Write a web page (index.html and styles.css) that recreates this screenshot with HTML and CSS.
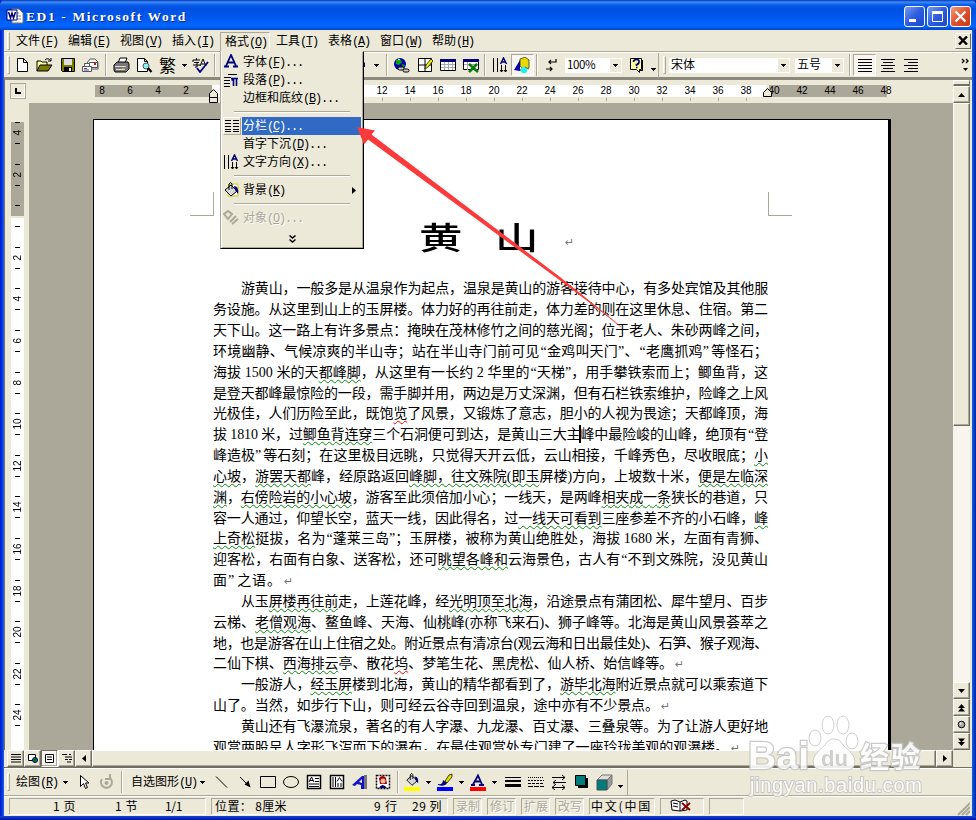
FILE: index.html
```html
<!DOCTYPE html>
<html lang="zh-CN">
<head>
<meta charset="utf-8">
<title>ED1 - Microsoft Word</title>
<link rel="stylesheet" href="styles.css">
</head>
<body>
<svg width="0" height="0" class="defs">
  <symbol id="down" viewBox="0 0 5 3"><path d="M0 0h5v1h-1v1h-1v1h-1v-1h-1v-1h-1z"/></symbol>
  <symbol id="dir" viewBox="0 0 16 16"><path d="M1.500 1v14M5.500 1v14M9.500 8v7M13.500 8v7M8 13l1.500 2 1.500-2M12 13l1.500 2 1.500-2" stroke="#000" fill="none"/><path d="M8.500 7l3-6 3 6M9.500 5h4" stroke="#00007b" stroke-width="1.500" fill="none"/></symbol>
  <symbol id="bucket" viewBox="0 0 16 16"><path d="M2 8l6-5 6 6-6 5z" fill="#d8d8d8" stroke="#000"/><path d="M6 8V2q2-3 3 0v5" fill="none" stroke="#000"/><path d="M11 4q5 0 4 8l-3-4z" fill="#00007b"/></symbol>
</svg>
<div class="window">
  <header class="title">
    <svg width="18" height="16" viewBox="0 0 18 16"><path d="M6 1h7l4 4v10H6z" fill="#fff" stroke="#777"/><path d="M8 5h5M8 8h7M8 11h7" stroke="#888"/><path d="M1 2h10v10H1z" fill="#fff" stroke="#00007b"/><path d="M2.500 4l2 6L6 5l1.500 5 2-6" fill="none" stroke="#00007b" stroke-width="1.500"/></svg>
    <span class="caption" data-w="161">ED1 - Microsoft Word</span>
    <div class="winbtns">
      <span class="wb"><svg width="19" height="19"><path d="M4 12h7v3H4z" fill="#fff"/></svg></span>
      <span class="wb"><svg width="19" height="19"><path d="M4.500 4.500h10v10h-10z" fill="none" stroke="#fff"/><path d="M4 4h11v3H4z" fill="#fff"/></svg></span>
      <span class="wb red"><svg width="19" height="19"><path d="M4.500 4.500l10 10M14.500 4.500l-10 10" stroke="#fff" stroke-width="2.200"/></svg></span>
    </div>
  </header>
  <div class="client">
    <nav class="menubar">
      <b class="grip"></b>
      <span class="mi"><em>文件<s>(<u>F</u>)</s></em></span>
      <span class="mi"><em>编辑<s>(<u>E</u>)</s></em></span>
      <span class="mi"><em>视图<s>(<u>V</u>)</s></em></span>
      <span class="mi"><em>插入<s>(<u>I</u>)</s></em></span>
      <span class="mi open"><em>格式<s>(<u>O</u>)</s></em></span>
      <span class="mi"><em>工具<s>(<u>T</u>)</s></em></span>
      <span class="mi"><em>表格<s>(<u>A</u>)</s></em></span>
      <span class="mi"><em>窗口<s>(<u>W</u>)</s></em></span>
      <span class="mi"><em>帮助<s>(<u>H</u>)</s></em></span>
      <span class="docclose"><svg width="10" height="9"><path d="M1 0.500l8 8M9 0.500l-8 8" stroke="#000" stroke-width="2.400"/></svg></span>
    </nav>
    <div class="toolbar">
      <b class="grip"></b>
      <span class="ic"><svg width="16" height="16"><path d="M3.500 1.500h6l4 4v9h-10zM9.500 1.500v4h4" fill="#fff" stroke="#000"/></svg></span>
      <span class="ic"><svg width="17" height="16"><path d="M1 14V4h4l1 1h5v3" fill="#ffff9a" stroke="#000"/><path d="M1 14l3-6h12l-4 6z" fill="#7b7b00" stroke="#000"/><path d="M9 3q3-3 6 1M15 1v3h-3" fill="none" stroke="#000"/></svg></span>
      <span class="ic"><svg width="16" height="16"><path d="M1.500 1.500h13v13h-12l-1-1z" fill="#7b7b00" stroke="#000"/><path d="M4 2h8v6H4z" fill="#dedede"/><path d="M4 10h8v4H4z"/><path d="M9 11h2v3H9z" fill="#fff"/></svg></span>
      <span class="ic"><svg width="17" height="16"><path d="M5 6l3-4h5l3 3v7H9z" fill="#fff" stroke="#555"/><path d="M7.500 5.500h8v5h-8z" fill="#fff" stroke="#555"/><path d="M12 6h2v2h-2z" fill="red"/><path d="M.5 9.500h9v5h-9zM2.500 9.500v-3h5v3" fill="#fff" stroke="#555"/><path d="M2 11.500h3M2 13h5" stroke="#44a"/></svg></span>
      <b class="sep w"></b>
      <span class="ic"><svg width="17" height="16"><path d="M5 6l2-5h7l-2 5" fill="#fff" stroke="#000"/><path d="M1 8l3-3h11l1 2v5l-3 3H2l-1-2z" fill="#777" stroke="#000"/><path d="M2 9.500h11M3 12.500h9" stroke="#ddd"/><path d="M9 12h2" stroke="#ee0"/></svg></span>
      <span class="ic"><svg width="17" height="16"><path d="M1.500 1.500h7l3 3v10h-10zM8.500 1.500v3h3" fill="#fff" stroke="#000"/><circle cx="10" cy="9" r="3" fill="#8ee" stroke="#555"/><path d="M12 11l3.500 4" stroke="#000" stroke-width="2"/></svg></span>
      <span class="ic han">繁</span>
      <span class="dd"><svg width="5" height="3"><use href="#down"/></svg></span>
      <span class="ic"><svg width="17" height="16"><path d="M1 3h7M4.500 1v2M1 3v2M2 5.500h5M5 6v4H3M1 8h7M8 9l3-7 3 7M9 7h4" fill="none" stroke="#000"/><path d="M5 11l3 4 8-10" fill="none" stroke="#00007b" stroke-width="1.800"/></svg></span>
      <b class="sep"></b>
      <i class="under"></i>
      <svg width="6" height="6"><path d="M5 0v5H0z" fill="#00007b"/></svg>
      <span class="dd wide"><svg width="5" height="3"><use href="#down"/></svg></span>
      <b class="sep"></b>
      <span class="ic"><svg width="17" height="17"><circle cx="7" cy="7" r="6" fill="#0000b0"/><path d="M3 3l4-1 2 3-3 3-3-1zM9 7l3 1-2 4z" fill="#0a0"/><path d="M5 2l2 1" stroke="#fff"/><rect x="5" y="10" width="6" height="3" rx="1.500" fill="#ccc" stroke="#000"/><rect x="10" y="12" width="6" height="3" rx="1.500" fill="#ccc" stroke="#000"/></svg></span>
      <span class="ic"><svg width="16" height="16"><path d="M1.500 1.500h13v13h-13zM8 1.500v13M1.500 8h13" fill="#fff" stroke="#000"/><path d="M8 12l1-4 5-6 2 2-5 6z" fill="#ee0" stroke="#000" stroke-width=".7"/></svg></span>
      <span class="ic"><svg width="16" height="16"><path d="M.5 2.500h15v11H.5z" fill="#fff" stroke="#000"/><path d="M0 2h16v3H0z" fill="#00007b"/><path d="M4.500 5v8M8.500 5v8M12.500 5v8M1 7.500h14M1 10.500h14" stroke="#aaa"/></svg></span>
      <span class="ic"><svg width="16" height="16"><path d="M.5 2.500h15v10H.5z" fill="#fff" stroke="#000"/><path d="M0 2h16v3H0z" fill="#00007b"/><path d="M4.500 5v8M1 7.500h14" stroke="#aaa"/><path d="M6 7l9 8M14 7l-8 8" stroke="#087b08" stroke-width="2.500"/></svg></span>
      <b class="sep"></b>
      <span class="ic"><svg width="16" height="16"><use href="#dir"/></svg></span>
      <span class="ic pressed"><svg width="17" height="17"><path d="M6 2l5-2 4 3v8l-5 2-4-4z" fill="#e8d800" stroke="#000" stroke-width=".6"/><path d="M0 13l6-10v11z" fill="#0000a8"/><path d="M6 13h4" stroke="#000"/><circle cx="10" cy="13" r="3.300" fill="#2ee"/><path d="M11 10l4 2" stroke="#777"/></svg></span>
      <b class="sep"></b>
      <span class="ic"><svg width="14" height="14"><path d="M4 4h7V1M6 2L4 4l2 2M1 11h6M5 9l2 2-2 2" fill="none" stroke="#000" stroke-width="1.200"/></svg></span>
      <span class="combo zoom"><em>100%</em><svg width="5" height="3"><use href="#down"/></svg></span>
      <span class="ic help"><svg width="15" height="17"><path d="M1.500 1.500h11v11h-2v3l-3-3h-6z" fill="#ffff9a" stroke="#000"/><path d="M13.500 3v10.500h-3" fill="none" stroke="#000"/><path d="M4.500 5q0-2.500 3-2.500t2.500 2.500-2.500 2.500v1.500M7 10.500h1.500" fill="none" stroke="#00007b" stroke-width="1.700"/></svg></span>
      <span class="dd low"><svg width="5" height="3"><use href="#down"/></svg></span>
      <b class="bar"></b><b class="grip"></b>
      <span class="combo face"><em>宋体</em><svg width="5" height="3"><use href="#down"/></svg></span>
      <span class="combo size"><em>五号</em><svg width="5" height="3"><use href="#down"/></svg></span>
      <b class="sep"></b>
      <span class="ic pressed"><svg width="16" height="14"><path d="M1 1.500h14M1 4.500h14M1 7.500h14M1 10.500h14M1 13.500h14" stroke="#000"/></svg></span>
      <span class="ic"><svg width="16" height="14"><path d="M1 1.500h14M3 4.500h10M1 7.500h14M3 10.500h10M1 13.500h14" stroke="#000"/></svg></span>
      <span class="ic"><svg width="16" height="14"><path d="M1 1.500h14M5 4.500h10M1 7.500h14M5 10.500h10M1 13.500h14" stroke="#000"/></svg></span>
      <span class="more"><svg width="9" height="14"><path d="M1 1l2 2-2 2M5 1l2 2-2 2" fill="none" stroke="#000" stroke-width="1.300"/><path d="M2 10h5l-2.500 3z"/></svg></span>
    </div>

    <div class="hruler">
      <span class="tab"><svg width="8" height="8"><path d="M2 1v5h5" fill="none" stroke="#000" stroke-width="2"/></svg></span>
      <div class="scale"><span>8</span><span>6</span><span>4</span><span>2</span><span></span><span></span><span></span><span></span><span></span><span></span><span class="t">12</span><span class="t">14</span><span class="t">16</span><span class="t">18</span><span class="t">20</span><span class="t">22</span><span class="t">24</span><span class="t">26</span><span class="t">28</span><span class="t">30</span><span class="t">32</span><span class="t">34</span><span class="t">36</span><span class="t">38</span><span>40</span><span>42</span><span>44</span><span>46</span><span>48</span></div>
      <svg class="indent left" width="9" height="14"><path d="M.5 8.500v-4l4-4 4 4v4zM.5 8.500h8v5h-8z" fill="#ece9d8" stroke="#000"/></svg>
      <svg class="indent right" width="9" height="9"><path d="M.5 8.500v-4l4-4 4 4v4z" fill="#ece9d8" stroke="#000"/></svg>
    </div>

    <div class="work">
      <div class="vruler"><div class="vscale"><span>4</span><span>2</span><span></span><span>2</span><span>4</span><span>6</span><span>8</span><span>10</span><span>12</span><span>14</span><span>16</span><span>18</span><span>20</span><span>22</span><span>24</span></div></div>
      <div class="desk">
        <article class="page">
          <b class="corner cl"></b><b class="corner cr"></b>
          <h1><span>黄</span><span>山</span><q>↵</q></h1>
          <p class="in" data-w="527">游黄山，一般多是从温泉作为起点，温泉是黄山的游客接待中心，有多处宾馆及其他服</p>
          <p data-w="555">务设施。从这里到山上的玉屏楼。体力好的再往前走，体力差的则在这里休息、住宿。第二</p>
          <p data-w="555">天下山。这一路上有许多景点：掩映在茂林修竹之间的慈光阁；位于老人、朱砂两峰之间，</p>
          <p data-w="555">环境幽静、气候凉爽的半山寺；站在半山寺门前可见<a>“</a>金鸡叫天门”、<a>“</a>老鹰抓鸡<a class="z">”</a>等怪石；</p>
          <p data-w="555">海拔 1500 米的天<i>都峰脚</i>，从这里有一长约 2 华里的<a>“</a>天梯”，用手攀铁索而上；鲫鱼背，这</p>
          <p data-w="555">是登天都峰最惊险的一段，需手脚并用，两边是万丈深渊，但有石栏铁索维护，险峰之上风</p>
          <p data-w="555">光极佳，人们历险至此，既饱<i class="r">览</i>了风景，又锻炼了意志，胆小的人视为畏途；天都峰顶，海</p>
          <p data-w="555">拔 1810 米，过<i>鲫鱼背连穿</i>三个石洞便可到达，是黄山三大主<b class="caret"></b>峰中最险峻的山峰，绝顶有<a>“</a>登</p>
          <p data-w="555">峰造极<a class="z">”</a>等石刻；在这里极目远眺，只觉得天开云低，云山相接，千峰秀色，尽收眼底；<i>小</i></p>
          <p data-w="555"><i>心坡</i>，<i>游罢天都</i>峰，经原路返回<i>峰脚，往文殊院(即玉</i>屏楼)方向，上坡数十米，<i>便是左临深</i></p>
          <p data-w="555"><i>渊</i>，<i>右傍险岩的小心坡</i>，游客至此须倍加小心；一线天，是两峰<i>相夹成一条</i>狭长的巷道，只</p>
          <p data-w="555">容一人通过，仰望长空，蓝天一线，因此得名，过<i>一线天可看到</i>三座参差不齐的小石峰，<i>峰</i></p>
          <p data-w="555"><i>上奇松</i>挺拔，名为<a>“</a>蓬莱三岛”；玉屏楼，被称为黄山绝胜处，海拔 1680 米，左面有青狮、</p>
          <p data-w="555">迎客松，右面有白象、送客松，还可<i>眺望各峰和</i>云海景色，古人有<a>“</a>不到文殊院，没见黄山</p>
          <p><span data-w="69">面<a class="z">”</a>之语。</span><q>↵</q></p>
          <p class="in" data-w="527">从玉<i>屏楼再往前</i>走，上莲花峰，经<i>光明顶至北海</i>，沿途景点有蒲团松、犀牛望月、百步</p>
          <p data-w="555">云梯、<i>老僧观海</i>、鳌鱼峰、天海、仙桃峰(亦称飞来石)、狮子峰等。北海是黄山风景荟萃之</p>
          <p data-w="555">地，也是游客在山上住宿之处。附近景点有清凉台(观云海和日出最佳处)、石笋、猴子观海、</p>
          <p><span data-w="460">二仙下棋、<i>西海排云</i>亭、散花<i class="r">坞</i>、梦笔生花、黑虎松、仙人桥、始信峰等。</span><q>↵</q></p>
          <p class="in" data-w="527">一般游人，<i>经玉屏</i>楼到北海，黄山的精华都看到了，<i>游毕北海</i>附近景点就可以乘索道下</p>
          <p><span data-w="446">山了。当然，如步行下山，则可经云谷寺回到温泉，途中亦有不少景点。</span><q>↵</q></p>
          <p class="in" data-w="527">黄山还有飞瀑流泉，著名的有人字瀑、九龙瀑、百丈瀑、三叠泉等。为了让游人更好地</p>
          <p><span data-w="516">观赏两股呈人字形飞泻而下的瀑布，在最佳观赏处专门建了一座玲珑美观的观瀑楼。</span><q>↵</q></p>
        </article>
      </div>
      <div class="vscroll">
        <span class="thumb"></span><span class="track"></span>
        <span class="btn"><svg width="7" height="4"><path d="M0 0h7l-3.500 4z"/></svg></span>
        <span class="btn"><svg width="7" height="8"><path d="M0 4l3.500-4 3.500 4zM0 7.500l3.500-4 3.500 4z"/></svg></span>
        <span class="btn"><svg width="9" height="9"><circle cx="4.500" cy="4.500" r="3.300" fill="#aaa" stroke="#000"/><circle cx="3.500" cy="3.500" r="1" fill="#fff"/></svg></span>
        <span class="btn"><svg width="7" height="8"><path d="M0 .5h7l-3.500 4zM0 4h7l-3.500 4z"/></svg></span>
      </div>
      <div class="vtop"><span class="split"></span><span class="btn"><svg width="7" height="4"><path d="M0 4h7l-3.500-4z"/></svg></span></div>
    </div>

    <div class="hscroll">
      <span class="btn"><svg width="10" height="9"><path d="M0 .5h10M0 3h10M0 5.500h10M0 8h10" stroke="#000"/></svg></span>
      <span class="btn"><svg width="10" height="9"><path d="M.5.500h7v6h-7z" fill="#fff" stroke="#000"/><circle cx="7" cy="6" r="2.500" fill="#087b08" stroke="#00007b"/></svg></span>
      <span class="btn on"><svg width="10" height="9"><path d="M.5.500h8v8h-8zM2 3h5M2 5.500h5" fill="#fff" stroke="#000"/></svg></span>
      <span class="btn"><svg width="10" height="9"><path d="M0 .5h5M3 3h7M3 5.500h3M5 8h4M7 .5h2M7 5.500h3" stroke="#000"/></svg></span>
      <span class="btn"><svg width="4" height="7"><path d="M4 0v7L0 3.500z"/></svg></span>
      <span class="hthumb"></span>
      <span class="btn"><svg width="4" height="7"><path d="M0 0v7l4-3.500z"/></svg></span>
    </div>

    <div class="draw">
      <b class="grip"></b>
      <em class="lbl">绘图<s>(<u>R</u>)</s></em>
      <span class="dd"><svg width="5" height="3"><use href="#down"/></svg></span>
      <span class="ic"><svg width="14" height="16"><path d="M3.500 1.500v11l3-3 2 5 2-1-2-4.500h3.500z" fill="#fff" stroke="#000"/></svg></span>
      <span class="ic"><svg width="15" height="16"><path d="M3 5a5.500 5.500 0 1 0 8-1M11 0v5H6" fill="none" stroke="#aca899" stroke-width="2"/><circle cx="7.500" cy="9" r="2" fill="#aca899"/></svg></span>
      <b class="sep w"></b>
      <em class="lbl b">自选图形<s>(<u>U</u>)</s></em>
      <span class="dd r"><svg width="5" height="3"><use href="#down"/></svg></span>
      <span class="ic"><svg width="14" height="14"><path d="M1 1.500l11 11" stroke="#000"/></svg></span>
      <span class="ic"><svg width="14" height="14"><path d="M2 2l7 7" stroke="#000"/><path d="M12.500 12.500l-6-3 4-4z"/></svg></span>
      <span class="ic"><svg width="16" height="14"><path d="M.5 1.500h15v11H.5z" fill="none" stroke="#000"/></svg></span>
      <span class="ic"><svg width="16" height="14"><ellipse cx="8" cy="7" rx="7.500" ry="5.500" fill="none" stroke="#000"/></svg></span>
      <span class="ic"><svg width="16" height="16"><path d="M1.500 1.500h13v13h-13z" fill="#fff" stroke="#000" stroke-width="1.500"/><path d="M3 8l2.500-5 2.500 5M4 6.500h3M9 4.500h4M9 7.500h4M3 10h10M3 12.500h10" fill="none" stroke="#000"/></svg></span>
      <span class="ic"><svg width="16" height="16"><path d="M1.500 1.500h13v13h-13z" fill="#fff" stroke="#000" stroke-width="1.500"/><path d="M4 3v10M6.500 3v10M9 9v4M12 9v4M8 7.500l2.500-4 2.500 4" fill="none" stroke="#000"/></svg></span>
      <span class="ic"><svg width="16" height="16"><path d="M12 1h3v14h-4z" fill="#777"/><path d="M0 11l10-9h2v13h-3v-4l-4-1-2 2z" fill="#1212c8"/><path d="M7 8l3-3v4z" fill="#ece9d8"/></svg></span>
      <span class="ic"><svg width="16" height="16"><path d="M1.500 1.500h13v13h-13z" fill="#fff" stroke="#000" stroke-width="1.500" stroke-dasharray="2 1"/><path d="M4 4q4-4 7 0l1 6H5z" fill="#a00"/><circle cx="8" cy="7" r="2.500" fill="#fb9"/><path d="M4 14q3-6 8 0z" fill="#00007b"/></svg></span>
      <b class="sep w"></b>
      <span class="ic n"><svg width="16" height="18"><use href="#bucket" width="16" height="14"/><path d="M0 14h16v4H0z" fill="#ff0"/></svg></span>
      <span class="dd m"><svg width="5" height="3"><use href="#down"/></svg></span>
      <span class="ic n"><svg width="16" height="18"><path d="M8 8l4-6 3-1v3l-5 6z" fill="#dd0" stroke="#000" stroke-width=".7"/><path d="M1 11q5 1 5-4l4 3q-2 4-9 2z" fill="#00007b"/><path d="M0 14h16v4H0z" fill="#00f"/></svg></span>
      <span class="dd m"><svg width="5" height="3"><use href="#down"/></svg></span>
      <span class="ic n"><svg width="16" height="18"><path d="M3 11.500l5-9 4 9M5 8.500h5M1 12h4M9 12h5" fill="none" stroke="#00007b" stroke-width="1.800"/><path d="M0 14h16v4H0z" fill="#f00"/></svg></span>
      <span class="dd m"><svg width="5" height="3"><use href="#down"/></svg></span>
      <span class="ic"><svg width="16" height="14"><path d="M0 2.500h16" stroke="#000"/><path d="M0 6h16" stroke="#000" stroke-width="2"/><path d="M0 10.500h16" stroke="#000" stroke-width="3"/></svg></span>
      <span class="ic"><svg width="16" height="14"><path d="M0 2.500h16" stroke="#000" stroke-dasharray="1 1"/><path d="M0 5.500h16" stroke="#000" stroke-dasharray="2 1"/><path d="M0 8.500h16" stroke="#000" stroke-dasharray="3 1"/><path d="M0 11.500h16" stroke="#000" stroke-dasharray="5 1"/></svg></span>
      <span class="ic"><svg width="16" height="16"><path d="M1 3.500h13M11 1l3 2.500-3 2.500M15 8.500H2M5 6l-3 2.500L5 11M1 13.500h13M4 11l-3 2.500L4 16M11 11l3 2.500-3 2.500" fill="none" stroke="#000"/></svg></span>
      <span class="ic"><svg width="16" height="16"><path d="M4 4h10v10H4z"/><path d="M1.500 1.500h10v10h-10z" fill="#007b7b" stroke="#000"/></svg></span>
      <span class="ic"><svg width="17" height="17"><path d="M1 6l5-5h10l-5 5z" fill="#ddd" stroke="#777"/><path d="M11 6l5-5v9l-5 6z" fill="#999" stroke="#777"/><path d="M1 6h10v10H1z" fill="#007b7b" stroke="#455"/></svg></span>
      <span class="dd low"><svg width="5" height="3"><use href="#down"/></svg></span>
      <b class="bar"></b>
    </div>

    <footer class="status">
      <span class="cell c1"><em data-w="23">1 页</em><em data-w="23">1 节</em><em data-w="17">1/1</em></span>
      <span class="cell c2"><em data-w="72">位置： 8厘米</em><em data-w="24">9 行</em><em data-w="30">29 列</em></span>
      <span class="cell off"><em>录制</em></span>
      <span class="cell off"><em>修订</em></span>
      <span class="cell off"><em>扩展</em></span>
      <span class="cell off"><em>改写</em></span>
      <span class="cell lang"><em data-w="61">中文(中国</em></span>
      <span class="cell book"><svg width="22" height="14"><path d="M1 2l4-1 5 2 5-2 2 1v9l-7 1-8-1z" fill="#fff" stroke="#000"/><path d="M10 3v9M3 4l5 1M3 7l5 1" stroke="#000"/><path d="M12 4l8 7M20 4l-8 7" stroke="#8b0000" stroke-width="2"/></svg></span>
      <span class="cell last"></span>
      <svg class="resize" width="13" height="14"><path d="M1 13L13 1M5 13l8-8M9 13l4-4" stroke="#aca899" stroke-width="2"/></svg>
    </footer>
  </div>

  <div class="menu">
    <div class="row"><svg class="mic" width="16" height="16"><path d="M3 12L8 1l5 11M5 8.500h6M1 12.500h5M10 12.500h5" fill="none" stroke="#00007b" stroke-width="1.800"/></svg><em>字体<s>(<u>F</u>)...</s></em></div>
    <div class="row"><svg class="mic" width="16" height="16"><path d="M5 2.500h9M1 5.500h7M1 8.500h6M1 11.500h6M1 14.500h6" stroke="#000"/><path d="M10.500 14V6M13.500 14V6M8 6.500h7M8.500 8h2" stroke="#00007b" stroke-width="1.600"/></svg><em>段落<s>(<u>P</u>)...</s></em></div>
    <div class="row"><b class="mic"></b><em>边框和底纹<s>(<u>B</u>)...</s></em></div>
    <hr>
    <div class="row hot"><span class="mic box"><svg width="14" height="14"><path d="M0 1.500h6M8 1.500h6M0 4.500h6M8 4.500h6M0 7.500h6M8 7.500h6M0 10.500h6M8 10.500h6M0 12.500h6M8 12.500h6" stroke="#000"/></svg></span><em>分栏<s>(<u>C</u>)...</s></em></div>
    <div class="row"><b class="mic"></b><em>首字下沉<s>(<u>D</u>)...</s></em></div>
    <div class="row"><svg class="mic" width="16" height="16"><use href="#dir"/></svg><em>文字方向<s>(<u>X</u>)...</s></em></div>
    <hr>
    <div class="row"><svg class="mic" width="16" height="16"><path d="M6 2h9v12H5z" fill="#fff" stroke="#cc0"/><use href="#bucket"/></svg><em>背景<s>(<u>K</u>)</s></em><svg class="sub" width="4" height="7"><path d="M0 0v7l4-3.500z"/></svg></div>
    <hr>
    <div class="row dim"><svg class="mic" width="16" height="16"><path d="M1 4l4-3 4 3-4 5zM7 12l6-6M9 14l6-5" fill="none" stroke="#aca899" stroke-width="2"/></svg><em>对象<s>(<u>O</u>)...</s></em></div>
    <div class="expand"><svg width="7" height="8"><path d="M.5.500L3.500 3l3-2.500M.5 4.500L3.500 7l3-2.500" fill="none" stroke="#000" stroke-width="1.500"/></svg></div>
  </div>

  <svg class="pointer" width="976" height="820"><path d="M357 127L375 130.500L371.500 134.500L560 277L622 327L558 279L368 139.500L364 144.500Z" fill="#fb3b3b"/><path d="M560 278l61 49" stroke="#fb3b3b" stroke-width=".8"/></svg>

  <div class="mark">
    <svg width="180" height="62"><g fill="#fff" stroke="#c8c8c8"><ellipse cx="82" cy="13" rx="6" ry="9"/><ellipse cx="97" cy="13" rx="6" ry="9"/><ellipse cx="69" cy="26" rx="6" ry="8"/><ellipse cx="106" cy="29" rx="6" ry="8"/><path d="M88 27q6 0 9 6 12 10 12 16 0 10-10 9H77q-10 0-10-9 0-6 12-16 3-6 9-6z"/></g>
      <g fill="#fff" stroke="#c4c4c4" stroke-width="2.500" paint-order="stroke" class="wm"><text x="2" y="57" font-size="39" textLength="61">Bai</text><text x="114" y="56" font-size="29" textLength="60">经验</text></g>
      <text class="wm" x="75" y="54" font-size="22" fill="#ccc" textLength="27">du</text></svg>
    <svg width="180" height="28"><text class="url" x="4" y="18" font-size="20" textLength="172" fill="#fff" stroke="#c4c4c4" stroke-width="2" paint-order="stroke">jingyan.baidu.com</text></svg>
  </div>
</div>
<script src="fit.js"></script>
</body>
</html>
```
FILE: styles.css
```css
* { box-sizing: border-box; }
body { margin: 0; overflow: hidden; font: 12px/16px "Liberation Serif", "Noto Sans CJK SC", sans-serif; color: #000; }
.defs { position: absolute; }
svg { display: block; flex: none; }
em, i { font-style: normal; }
em { white-space: pre; font-family: "Noto Sans CJK SC", sans-serif; }
s { text-decoration: none; font-family: "Liberation Mono", monospace; font-size: 12px; letter-spacing: -1.2px; }
u { text-underline-offset: 1px; }
.window { position: relative; width: 976px; height: 820px; padding: 0 4px 4px; background: linear-gradient(90deg, #0019cf 0, #0831d9 2px, #166aee 4px, #166aee 970px, #0855dd 973px, #001ea0 976px); }
.window::after { content: ""; position: absolute; left: 0; right: 0; bottom: 0; height: 4px; background: linear-gradient(#1646d8, #0010a0); }

.title { height: 30px; margin: 0 -4px; padding: 1px 5px 0 6px; display: flex; align-items: center; background: linear-gradient(#0831b0 0, #3b8cf8 2px, #0a5be8 5px, #0050e0 9px, #0058f0 18px, #0266ff 26px, #0047c8 30px); border-radius: 5px 5px 0 0; }
.caption { margin: 3px 0 0 2px; white-space: pre; color: #fff; font: bold 13.500px/16px "Liberation Serif", serif; text-shadow: 1px 1px #0a2a80; }
.winbtns { margin-left: auto; display: flex; gap: 2px; padding-top: 2px; }
.wb { width: 21px; height: 21px; border: 1px solid #fff; border-radius: 3px; background: linear-gradient(135deg, #7a9df5, #2b5be0 50%, #1d48c8); }
.wb.red { background: linear-gradient(135deg, #f0a080, #e0502c 50%, #c63a10); }

.client { height: 786px; background: #ece9d8; display: flex; flex-direction: column; }
.grip { width: 3px; height: 18px; border: 1px solid; border-color: #fff #aca899 #aca899 #fff; flex: none; }
.sep { flex: none; width: 2px; height: 22px; border-left: 1px solid #aca899; border-right: 1px solid #fff; margin: 0 2px; }
.sep.w { margin: 0 3px; }
.bar { flex: none; width: 1px; height: 25px; background: #aca899; }

.menubar { height: 22px; display: flex; align-items: center; padding: 0 1px 0 3px; border-bottom: 1px solid #aca899; }
.mi { width: 52px; height: 20px; padding: 1px 0 0 5px; flex: none; }
.grip + .mi { margin-left: 1px; }
.mi.open { width: 50px; margin: 2px 1px 0; padding-left: 4px; padding-top: 0; border: 1px solid; border-color: #aca899 #fff transparent #aca899; }
.docclose { margin-left: auto; width: 16px; height: 16px; display: grid; place-items: center; border: 1px solid; border-color: #fff #716f64 #716f64 #fff; }

.toolbar { height: 28px; display: flex; align-items: center; padding-left: 3px; border-bottom: 3px solid #8c8a7e; border-top: 1px solid #fff; }
.ic { width: 23px; height: 22px; display: grid; place-items: center; flex: none; }
.ic.han { font: 17px/20px "Noto Sans CJK SC"; }
.ic.pressed { border: 1px solid; border-color: #aca899 #fff #fff #aca899; background: #f7f5ee; }
.dd { width: 10px; display: grid; place-items: center; flex: none; }
.dd.wide { width: 14px; margin: 0 1px 0 3px; }
.dd.low { height: 12px; margin-top: 8px; }
.under { width: 142px; flex: none; }
.combo { height: 15px; flex: none; background: #fff; display: flex; align-items: center; justify-content: space-between; padding: 0 0 0 2px; }
.combo svg { box-sizing: content-box; padding: 5px 3px; background: #ece9d8; border: 1px solid #fff; height: 3px; }
.zoom { width: 57px; margin-left: 2px; }
.zoom em { font-size: 11.500px; letter-spacing: -.4px; }
.toolbar .help { margin-left: 3px; }
.toolbar .bar { margin: 0 4px 0 0; }
.face { width: 121px; margin-left: 3px; }
.size { width: 49px; margin: 0 3px 0 5px; }
.combo em { margin-top: -2px; }
.more { margin-left: auto; margin-right: 2px; }

.hruler { position: relative; height: 23px; flex: none; display: flex; padding-left: 5px; border-left: 1px solid #716f64; }
.tab { width: 16px; height: 16px; margin-top: 3px; display: grid; place-items: center; border: 1px solid #aca899; box-shadow: inset -1px -1px #fff; }
.scale { display: flex; margin: 5px 0 0 62px; height: 16px; font: 10px/12px "Liberation Sans", sans-serif; background: linear-gradient(90deg, transparent 7px, #aca899 7px 124px, #fff 124px 678px, transparent 678px 681px, #aca899 681px 799px, transparent 799px) 0 0 / 100% 12px no-repeat; }
.scale span { width: 28px; text-align: center; }
.scale .t { background: linear-gradient(#aca899, #aca899) 50% 13px / 1px 3px no-repeat; }
.indent { position: absolute; }
.indent.left { left: 204px; top: 9px; }
.indent.right { left: 758px; top: 8px; }

.work { position: relative; height: 647px; flex: none; display: flex; border-left: 1px solid #716f64; }
.vruler { width: 24px; flex: none; overflow: hidden; padding: 9px 5px 0 6px; }
.vscale { width: 13px; height: 650px; font: 10px/13px "Liberation Sans", sans-serif; background: linear-gradient(transparent 10px, #aca899 10px 104px, #ece9d8 104px 106px, #fff 106px); }
.vscale span { width: 13px; height: 41.600px; display: flex; align-items: center; justify-content: center; writing-mode: vertical-rl; transform: rotate(180deg); background: linear-gradient(transparent 10px, #000 10px 11px, transparent 11px 31px, #000 31px 32px, transparent 32px) 50% 0 / 5px 100% no-repeat; }
.desk { width: 924px; flex: none; background: #aca899; overflow: hidden; }
.page { position: relative; width: 798px; height: 700px; margin: 16px 0 0 64px; background: #fff; border: 1px solid #000; border-right-width: 3px; padding-left: 119px; }
.corner { position: absolute; top: 72px; width: 24px; height: 24px; border-bottom: 1px solid #aca899; }
.cl { left: 96px; border-right: 1px solid #aca899; }
.cr { left: 674px; border-left: 1px solid #aca899; }
h1 { margin: 0; height: 158px; padding: 97px 0 0 206px; display: flex; font: 500 31px/38px "Noto Sans CJK SC"; }
h1 span { width: 76px; height: 38px; transform: scaleX(1.400); transform-origin: 0 0; flex: none; }
h1 q { margin: 16px 0 0 -6px; }
q { quotes: none; font: 11px/20px "DejaVu Sans"; color: #777; margin-left: 2px; }
q::before, q::after { content: none; }
p { margin: 0; height: 21px; width: 600px; white-space: pre; font-size: 14px; line-height: 21px; }
p:nth-of-type(6n) { height: 20px; }
.in { margin-left: 28px; }
a { margin-left: 1px; }
a.z { margin: 0 2px 0 0; }
p i { text-decoration: underline wavy #078a07 1px; text-underline-offset: 2px; text-decoration-skip-ink: none; }
p i.r { text-decoration-color: #f00; }
.caret { display: inline-block; width: 2px; height: 18px; margin: 0 -1px; background: #000; vertical-align: -4px; }

.btn { width: 17px; height: 17px; flex: none; display: grid; place-items: center; background: #ece9d8; border: 1px solid; border-color: #fff #716f64 #716f64 #fff; box-shadow: inset -1px -1px #aca899; }
.btn.on { border-color: #716f64 #fff #fff #716f64; background: #f7f5ee; }
.vscroll { width: 17px; flex: none; display: flex; flex-direction: column; }
.thumb { height: 323px; border: 1px solid; border-color: #fff #716f64 #716f64 #fff; box-shadow: inset -1px -1px #aca899; }
.track { flex: 1; background: #f7f5ee; }
.vtop { position: absolute; right: 2px; top: -23px; width: 17px; }
.split { display: block; height: 6px; border: 1px solid; border-color: #fff #716f64 #716f64 #fff; border-bottom-width: 2px; }

.hscroll { height: 18px; flex: none; display: flex; padding-left: 3px; border-bottom: 1px solid #716f64; }
.hthumb { width: 844px; border: 1px solid; border-color: #fff #716f64 #716f64 #fff; box-shadow: inset -1px -1px #aca899; }
.draw { height: 28px; flex: none; display: flex; align-items: center; padding-left: 3px; border-bottom: 1px solid #aca899; border-top: 1px solid #fff; }
.lbl { width: 42px; margin: 0 2px 0 6px; }
.lbl.b { width: 64px; margin-left: 5px; }
.draw .lbl + .dd { margin-right: 2px; }
.draw .lbl + .dd.r { margin-right: 3px; }
.draw .ic.n { width: 20px; }
.draw .dd.m { width: 13px; }
.draw .dd.low { width: 8px; }
.draw .bar { margin-left: 3px; }

.status { height: 20px; display: flex; align-items: flex-start; padding: 1px 0 0 5px; border-top: 1px solid #fff; }
.cell { flex: none; height: 17px; border: 1px solid; border-color: #aca899 #fff #fff #aca899; display: flex; margin-right: 5px; line-height: 14px; }
.cell em { flex: none; }
.c1 { width: 197px; padding-left: 43px; }
.c1 em { width: 62px; }
.c1 em + em { width: 50px; }
.c2 { width: 237px; padding-left: 3px; }
.c2 em { width: 38px; }
.c2 em:first-child { width: 159px; }
.cell.off { width: 29px; padding-left: 2px; color: #aca899; text-shadow: 1px 1px #fff; }
.lang { width: 66px; padding-left: 1px; }
.book { width: 44px; padding: 0 0 0 9px; }
.last { width: 35px; }
.resize { margin: 4px 2px 0 auto; }

.menu { position: absolute; left: 220px; top: 51px; width: 144px; height: 198px; padding: 1px 2px 0 2px; background: #ece9d8; border: 1px solid; border-color: #ece9d8 #000 #000 #aca899; box-shadow: inset 1px 0 #fff, inset -1px -1px #aca899; }
.row { height: 18px; display: flex; align-items: center; }
.row em { height: 18px; line-height: 16px; flex: 1; }
.row > .mic { width: 16px; margin-right: 4px; flex: none; }
.row > .mic.box { width: 18px; height: 18px; margin: 0; border: 1px solid; border-color: #fff #aca899 #aca899 #fff; display: grid; place-items: center; }
.hot em { background: #316ac5; color: #fff; padding-left: 1px; margin-left: 1px; }
.row > .sub { margin: 0 5px 0 0; }
.dim { color: #aca899; text-shadow: 1px 1px #fff; }
.menu hr { margin: 4px 11px 4px 11px; height: 2px; border: 0; border-top: 1px solid #aca899; border-bottom: 1px solid #fff; }
.expand { display: flex; justify-content: center; padding-top: 8px; }

.pointer { position: absolute; left: 0; top: 0; pointer-events: none; }
.mark { position: absolute; left: 746px; top: 712px; opacity: .88; }
.mark svg { overflow: visible; }
.mark .wm { font-family: "Liberation Sans", "Noto Sans CJK SC", sans-serif; font-weight: bold; }
.mark .url { font-family: "Liberation Sans", sans-serif; }
```
FILE: fit.js
```js
// Spread or tighten the letters of each marked run so that it fills its measure.
document.querySelectorAll('[data-w]').forEach(function (el) {
  var range = document.createRange();
  range.selectNodeContents(el);
  var natural = range.getBoundingClientRect().width;
  var count = Array.from(el.textContent).length;
  el.style.letterSpacing = (Number(el.dataset.w) - natural) / count + 'px';
});
```
